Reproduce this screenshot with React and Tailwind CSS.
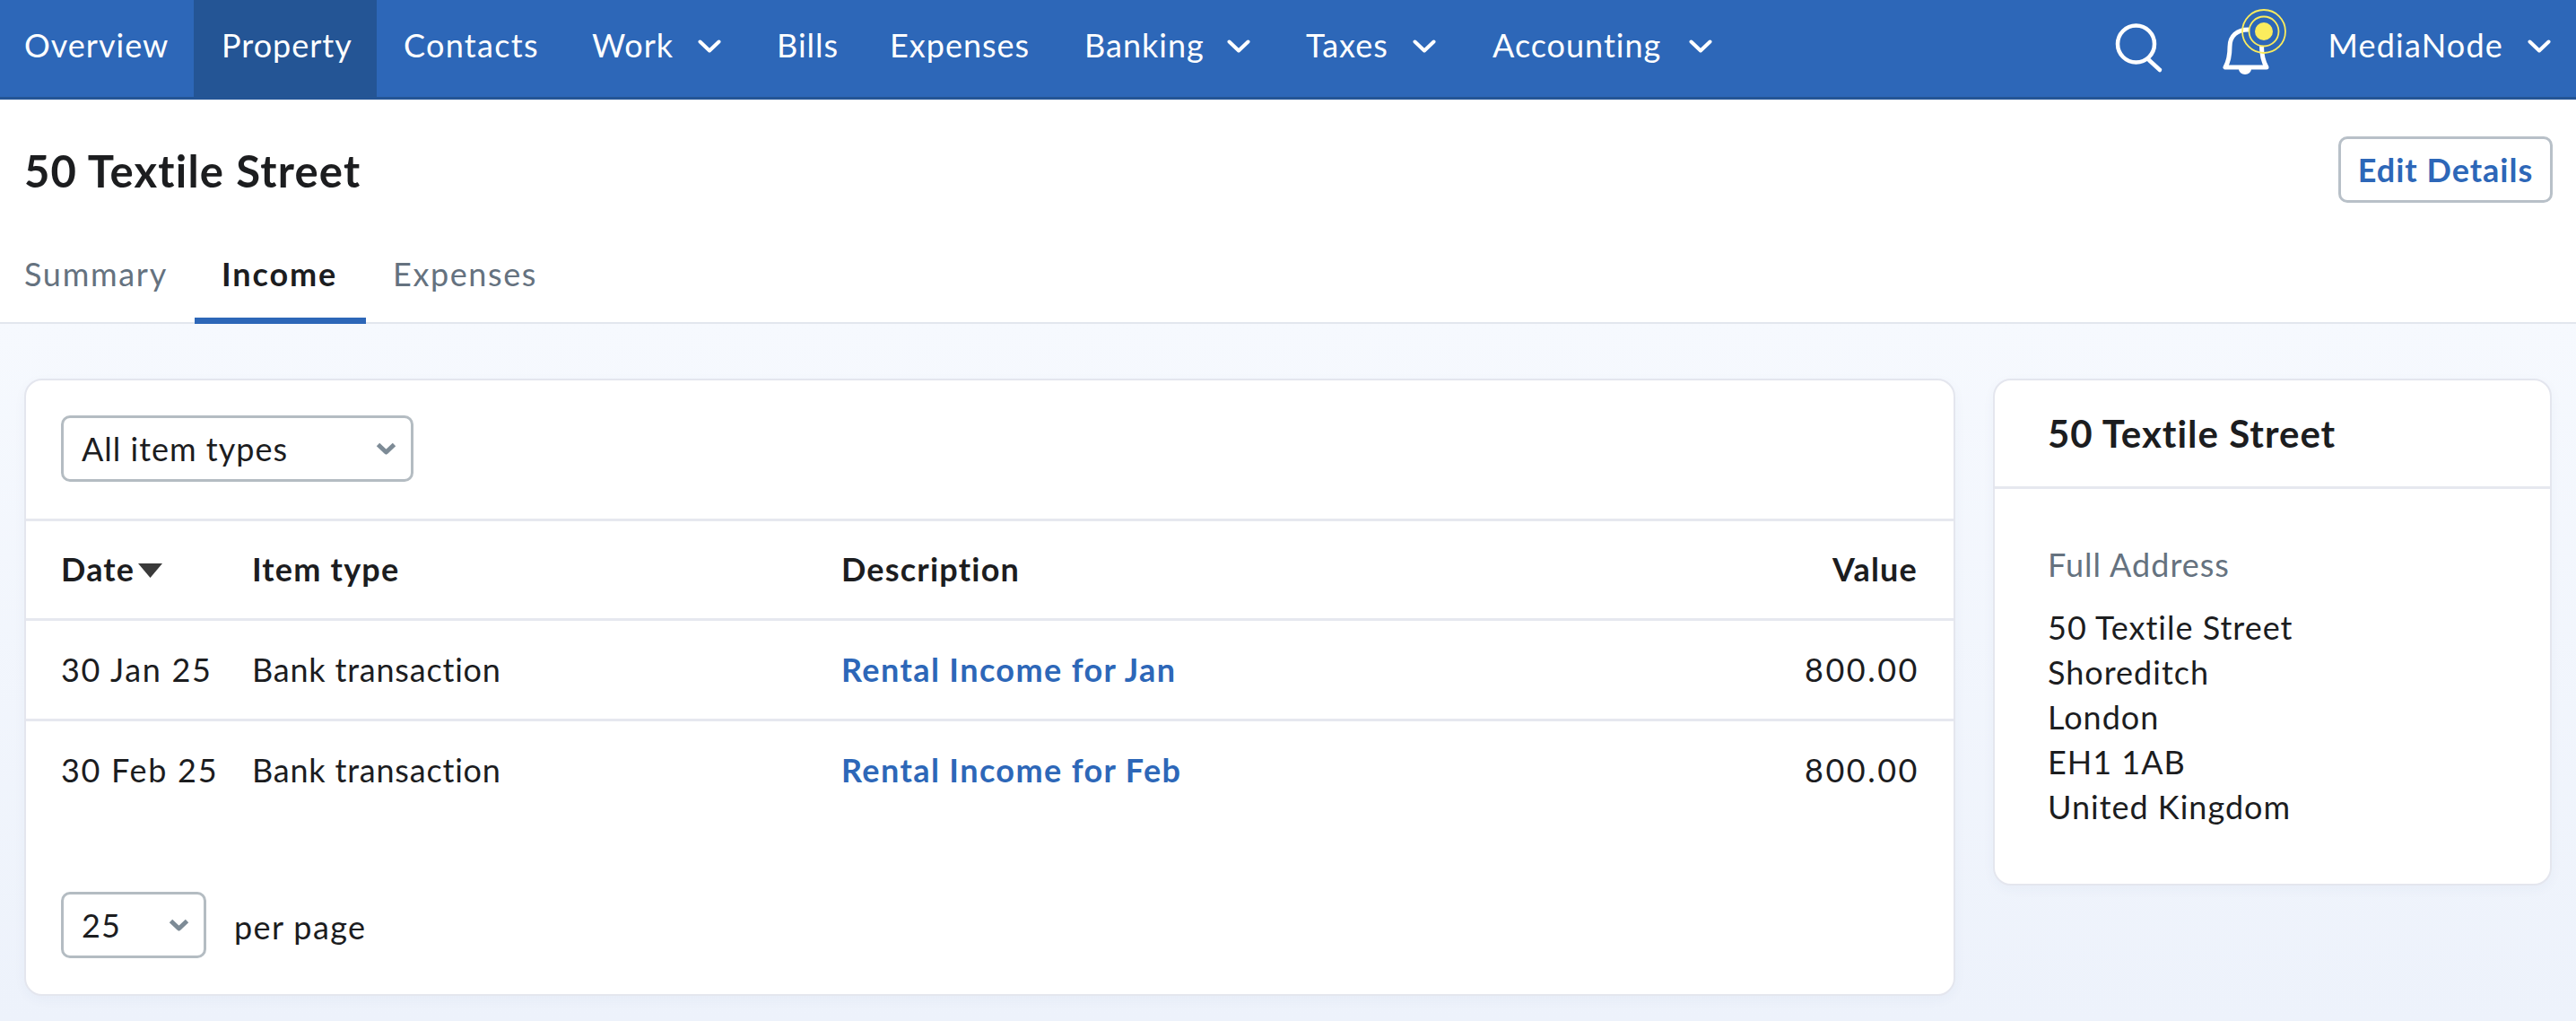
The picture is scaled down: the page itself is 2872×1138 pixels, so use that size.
import React from 'react';

function Chevron({ className }) {
  return (
    <svg viewBox="0 0 26 15" fill="none" className={className}>
      <path d="M2.5 2.5 L13 12.5 L23.5 2.5" stroke="currentColor" strokeWidth="4" strokeLinecap="round" strokeLinejoin="round" />
    </svg>
  );
}

function SelectChevron() {
  return (
    <svg viewBox="0 0 23 14" className="w-[23px] h-[14px] text-[#7d8b96]" fill="none">
      <path d="M2.5 2.5 L11.5 11 L20.5 2.5" stroke="currentColor" strokeWidth="5" strokeLinejoin="round" />
    </svg>
  );
}

function NavItem({ label, caret, active, className = '' }) {
  return (
    <a className={`h-full flex items-center justify-between pb-[8px] shrink-0 ${active ? 'bg-[#245595]' : ''} ${className}`}>
      <span>{label}</span>
      {caret && <Chevron className="w-[26px] h-[15px] mt-[2px]" />}
    </a>
  );
}

const rows = [
  { date: '30 Jan 25', type: 'Bank transaction', desc: 'Rental Income for Jan', value: '800.00' },
  { date: '30 Feb 25', type: 'Bank transaction', desc: 'Rental Income for Feb', value: '800.00' },
];

const addressLines = ['50 Textile Street', 'Shoreditch', 'London', 'EH1 1AB', 'United Kingdom'];

export default function App() {
  return (
    <div className="w-[2872px] h-[1138px] overflow-hidden flex flex-col text-[#1c1d1f] font-['Lato',sans-serif] text-[36px] tracking-[1px]">
      {/* Top nav */}
      <nav className="h-[111px] shrink-0 bg-[#2d67b8] border-b-[3px] border-[#245595] flex items-center text-white">
        <NavItem label="Overview" className="w-[216px] pl-[27px]" />
        <NavItem label="Property" active className="w-[204px] pl-[31px]" />
        <NavItem label="Contacts" className="w-[211px] pl-[30px] tracking-[1.3px]" />
        <NavItem label="Work" caret className="w-[207px] pl-[29px] pr-[34px]" />
        <NavItem label="Bills" className="w-[123px] pl-[28px]" />
        <NavItem label="Expenses" className="w-[218px] pl-[31px]" />
        <NavItem label="Banking" caret className="w-[247px] pl-[30px] pr-[32px]" />
        <NavItem label="Taxes" caret className="w-[207px] pl-[30px] pr-[32px]" />
        <NavItem label="Accounting" caret className="w-[306px] pl-[31px] pr-[30px]" />
        <div className="ml-auto flex items-center h-full pr-[28px] pb-[8px]">
          <svg viewBox="0 0 56 56" className="w-[56px] h-[56px] mr-[57px] mt-[8px]" fill="none">
            <circle cx="24.5" cy="23" r="20.5" stroke="#fff" strokeWidth="4.5" />
            <path d="M39 41 L51 52" stroke="#fff" strokeWidth="4.5" strokeLinecap="round" />
          </svg>
          <svg viewBox="0 0 90 84" className="w-[90px] h-[84px] mr-[35px]" fill="none">
            <path d="M37 25 C24 25 16 32 16 44 C16 54 15 60 11 67 H57 C53 60 51.5 52 51.5 43" stroke="#fff" strokeWidth="5" strokeLinejoin="round" />
            <path d="M26 69 a7 6 0 0 0 14 0 z" fill="#fff" />
            <circle cx="54" cy="27" r="24" stroke="#fbec5d" strokeWidth="1.8" />
            <circle cx="54" cy="27" r="16.5" fill="#2d67b8" stroke="#fbec5d" strokeWidth="1.8" />
            <circle cx="54" cy="27" r="10" fill="#fbec5d" />
          </svg>
          <span className="tracking-[1.2px]">MediaNode</span>
          <Chevron className="w-[26px] h-[15px] ml-[27px] mt-[2px]" />
        </div>
      </nav>

      {/* Page head */}
      <header className="bg-white border-b-[2px] border-[#e2e6ee] h-[250px] shrink-0">
        <div className="flex items-start justify-between pl-[27px] pr-[26px] pt-[41px]">
          <h1 className="text-[49px] leading-[58px] font-bold mt-[9px] tracking-[1.2px]">50 Textile Street</h1>
          <button className="h-[74px] w-[239px] border-[3px] border-[#b8c0c8] rounded-[10px] text-[#2d67b8] font-bold">Edit Details</button>
        </div>
        <div className="flex mt-[31px] h-[104px]">
          <a className="w-[217px] pl-[27px] text-[#65727f] pt-[21px] tracking-[1.7px]">Summary</a>
          <a className="pl-[30px] w-[191px] font-bold border-b-[7px] border-[#2d67b8] pt-[21px] tracking-[1.9px]">Income</a>
          <a className="pl-[30px] text-[#65727f] pt-[21px] tracking-[1.6px]">Expenses</a>
        </div>
      </header>

      {/* Content */}
      <main className="flex-1 flex items-start pl-[27px] pr-[27px] pt-[61px] gap-[42px] bg-linear-to-b from-[#f6f9fe] to-[#edf2fb]">
        <section className="w-[2153px] h-[688px] bg-white border-[2px] border-[#e4e6ee] rounded-[20px] shadow-[0_4px_14px_rgba(60,80,140,0.04)]">
          <div className="h-[157px] pl-[39px] pt-[39px] border-b-[3px] border-[#e6e8ef]">
            <div className="w-[393px] h-[74px] border-[3px] border-[#b4bcc2] rounded-[10px] pl-[20px] pr-[16px] flex items-center justify-between">
              <span>All item types</span>
              <SelectChevron />
            </div>
          </div>
          <div className="grid grid-cols-[213px_657px_1fr_auto] items-center pl-[39px] pr-[40px] pb-[3px] h-[111px] border-b-[3px] border-[#e6e8ef] font-bold tracking-[1.2px]">
            <div className="flex items-center">
              Date
              <svg viewBox="0 0 27 16" className="w-[27px] h-[16px] ml-[4px] mt-[4px]"><path d="M0 0 H27 L13.5 16 Z" fill="#3a3a3a" /></svg>
            </div>
            <div>Item type</div>
            <div>Description</div>
            <div>Value</div>
          </div>
          {rows.map((row, i) => (
            <div key={row.date} className={`grid grid-cols-[213px_657px_1fr_auto] items-center pl-[39px] pr-[40px] h-[112px] ${i === 0 ? 'pb-[1px] border-b-[3px] border-[#e6e8ef]' : 'pb-[5px]'}`}>
              <div className="tracking-[1.7px]">{row.date}</div>
              <div className="tracking-[0.8px]">{row.type}</div>
              <div className="text-[#2d67b8] font-bold tracking-[1.4px]">{row.desc}</div>
              <div className="tracking-[2.5px] mr-[-2px]">{row.value}</div>
            </div>
          ))}
          <div className="flex items-center pl-[39px] mt-[78px]">
            <div className="w-[162px] h-[74px] border-[3px] border-[#b4bcc2] rounded-[10px] pl-[20px] pr-[16px] flex items-center justify-between">
              <span>25</span>
              <SelectChevron />
            </div>
            <span className="ml-[31px] mt-[3px] tracking-[1.4px]">per page</span>
          </div>
        </section>

        <aside className="w-[623px] h-[565px] bg-white border-[2px] border-[#e4e6ee] rounded-[20px] shadow-[0_4px_14px_rgba(60,80,140,0.04)]">
          <div className="h-[121px] pl-[59px] flex items-center border-b-[3px] border-[#e6e8ef] text-[42px] font-bold">50 Textile Street</div>
          <div className="pl-[59px] pt-[59px]">
            <div className="text-[#65727f] leading-[50px]">Full Address</div>
            <div className="mt-[20px] leading-[50px]">
              {addressLines.map((line) => (
                <div key={line}>{line}</div>
              ))}
            </div>
          </div>
        </aside>
      </main>
    </div>
  );
}
